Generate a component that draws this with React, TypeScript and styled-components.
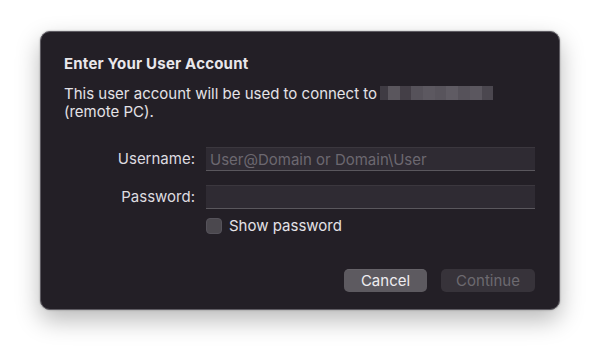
import React from "react";
import styled, { createGlobalStyle } from "styled-components";

const Global = createGlobalStyle`
  html, body { margin: 0; padding: 0; background: #ffffff; }
  body { font-family: "Inter", "Liberation Sans", sans-serif; -webkit-font-smoothing: antialiased; }
`;

const Stage = styled.div`
  width: 600px;
  height: 359px;
  box-sizing: border-box;
  padding: 31px 40px;
  background: #ffffff;
`;

const Dialog = styled.div`
  width: 520px;
  height: 279px;
  box-sizing: border-box;
  background: #231f26;
  border: 1px solid #5e5b62;
  border-radius: 10px;
  box-shadow: 0 10px 24px rgba(0, 0, 0, 0.28), 0 0 2px rgba(0, 0, 0, 0.35);
  padding: 23px 24px 17px 23px;
  display: flex;
  flex-direction: column;
`;

const Title = styled.div`
  font-size: 15px;
  font-weight: 700;
  line-height: 18px;
  letter-spacing: 0.2px;
  color: #e9e7eb;
`;

const Description = styled.div`
  margin-top: 12px;
  font-size: 15px;
  line-height: 18px;
  color: #e4e2e6;
`;

const Redacted = styled.span`
  display: inline-flex;
  vertical-align: -1px;
  height: 14px;
  margin-left: 3px;
`;

const Pixel = styled.span<{ $w: number; $c: string }>`
  display: inline-block;
  width: ${(p) => p.$w}px;
  height: 14px;
  background: ${(p) => p.$c};
`;

const Form = styled.div`
  margin-top: 26px;
  display: grid;
  grid-template-columns: 131px 329px;
  column-gap: 11px;
  row-gap: 14px;
  align-items: center;
`;

const Label = styled.label`
  text-align: right;
  font-size: 15px;
  line-height: 18px;
  color: #dedce0;
`;

const Field = styled.input`
  height: 24px;
  box-sizing: border-box;
  margin: 0;
  padding: 0 4px;
  background: #2f2b33;
  border: none;
  border-top: 1px solid #3b373e;
  border-bottom: 1px solid #5a575d;
  color: #e4e2e6;
  font-family: inherit;
  font-size: 15px;
  outline: none;
  &::placeholder { color: #6c6870; }
`;

const CheckRow = styled.div`
  grid-column: 2;
  margin-top: -5px;
  height: 16px;
  display: flex;
  align-items: center;
  gap: 7px;
  font-size: 15px;
  line-height: 16px;
  color: #e4e2e6;
`;

const Box = styled.span`
  width: 16px;
  height: 16px;
  flex: none;
  box-sizing: border-box;
  border-radius: 4px;
  background: #4b484e;
  border: 1px solid #55525a;
`;

const Footer = styled.div`
  margin-top: auto;
  display: flex;
  justify-content: flex-end;
  gap: 14px;
`;

const Button = styled.button<{ $disabled?: boolean }>`
  height: 23px;
  padding: 0;
  width: ${(p) => (p.$disabled ? 94 : 83)}px;
  border: none;
  border-radius: 5px;
  font-family: inherit;
  font-size: 15px;
  background: ${(p) => (p.$disabled ? "#37333a" : "#5d5a60")};
  color: ${(p) => (p.$disabled ? "#6d6a70" : "#efedf0")};
  box-shadow: ${(p) => (p.$disabled ? "none" : "0 0.5px 0 rgba(255,255,255,0.12) inset")};
`;

const pixels: [number, string][] = [
  [8, "#3f3b43"],
  [12, "#5a565d"],
  [11, "#443f47"],
  [12, "#56525a"],
  [12, "#5c5860"],
  [11, "#58545c"],
  [12, "#5f5b63"],
  [12, "#56525a"],
  [12, "#5b575f"],
  [11, "#4b474f"],
];

export default function App() {
  return (
    <>
      <Global />
      <Stage>
        <Dialog>
          <Title>Enter Your User Account</Title>
          <Description>
            This user account will be used to connect to
            <Redacted>
              {pixels.map(([w, c], i) => (
                <Pixel key={i} $w={w} $c={c} />
              ))}
            </Redacted>
            <br />
            (remote PC).
          </Description>
          <Form>
            <Label>Username:</Label>
            <Field placeholder="User@Domain or Domain\User" />
            <Label>Password:</Label>
            <Field type="password" />
            <CheckRow>
              <Box />
              Show password
            </CheckRow>
          </Form>
          <Footer>
            <Button>Cancel</Button>
            <Button $disabled>Continue</Button>
          </Footer>
        </Dialog>
      </Stage>
    </>
  );
}
